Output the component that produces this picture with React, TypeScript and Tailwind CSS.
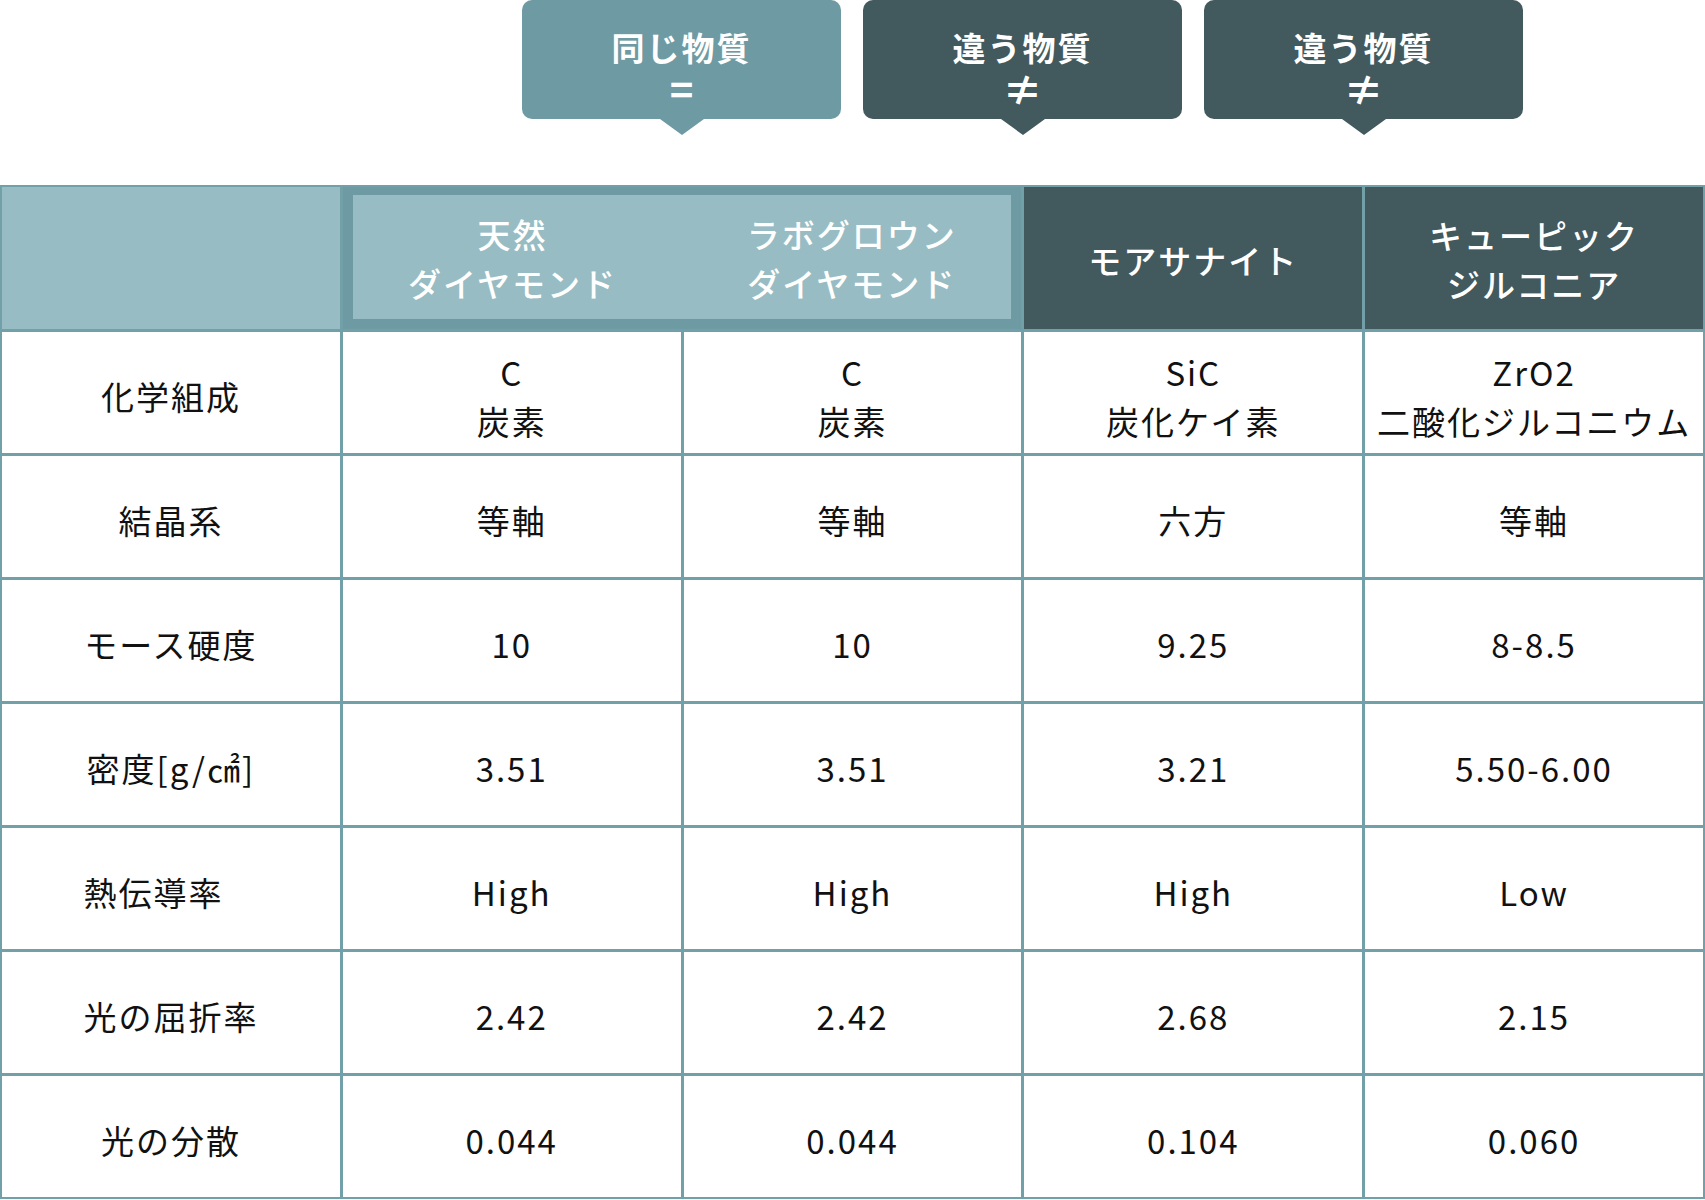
const font = {
  fontFamily: '"Noto Sans CJK JP", "Noto Sans", sans-serif',
};

const rows = [
  { label: "化学組成", values: [["C", "炭素"], ["C", "炭素"], ["SiC", "炭化ケイ素"], ["ZrO2", "二酸化ジルコニウム"]] },
  { label: "結晶系", values: [["等軸"], ["等軸"], ["六方"], ["等軸"]] },
  { label: "モース硬度", values: [["10"], ["10"], ["9.25"], ["8-8.5"]] },
  { label: "密度[g/㎠]", values: [["3.51"], ["3.51"], ["3.21"], ["5.50-6.00"]] },
  { label: "熱伝導率　", values: [["High"], ["High"], ["High"], ["Low"]] },
  { label: "光の屈折率", values: [["2.42"], ["2.42"], ["2.68"], ["2.15"]] },
  { label: "光の分散", values: [["0.044"], ["0.044"], ["0.104"], ["0.060"]] },
];

function Bubble({ title, sign, dark }: { title: string; sign: string; dark?: boolean }) {
  return (
    <div
      className={
        "relative flex h-[119px] w-[319px] flex-col items-center rounded-[10px] pt-[26px] text-white " +
        (dark ? "bg-[#42595e]" : "bg-[#6e9aa3]")
      }
    >
      <div className="text-[33px] font-bold leading-[42px] tracking-[2px]">{title}</div>
      <div className="text-[40px] font-semibold leading-[40px]">{sign}</div>
      <svg
        className="absolute left-1/2 top-full -translate-x-1/2"
        width="44"
        height="16"
        viewBox="0 0 44 16"
      >
        <polygon points="0,0 44,0 22,16" fill={dark ? "#42595e" : "#6e9aa3"} />
      </svg>
    </div>
  );
}

function Lines({ lines, white }: { lines: string[]; white?: boolean }) {
  return (
    <div
      className={
        "flex h-full flex-col items-center justify-center text-center text-[33px] leading-[49px] tracking-[2px] " +
        (white ? "pt-[4px] font-medium text-white" : "pt-[8px] text-[#111111]")
      }
    >
      {lines.map((l, i) => (
        <div key={i} className="whitespace-pre">
          {l}
        </div>
      ))}
    </div>
  );
}

export default function App() {
  return (
    <div className="w-[1705px] bg-white" style={font}>
      {/* bubbles */}
      <div className="flex h-[185px]">
        <div className="w-[340px]" />
        <div className="flex flex-1 justify-center gap-[22px]">
          <Bubble title="同じ物質" sign="=" />
          <Bubble title="違う物質" sign="≠" dark />
          <Bubble title="違う物質" sign="≠" dark />
        </div>
      </div>

      {/* table */}
      <div className="grid grid-cols-5 grid-rows-[142px_repeat(7,121px)] gap-[3px] bg-[#72a0a8] p-[2px]">
        <div className="bg-[#98bcc3]" />
        <div className="col-span-2 border-x-[10px] border-b-[10px] border-t-[8px] border-[#6e9aa3] bg-[#98bcc3]">
          <div className="-mx-[10px] grid h-full grid-cols-2">
            <Lines lines={["天然", "ダイヤモンド"]} white />
            <Lines lines={["ラボグロウン", "ダイヤモンド"]} white />
          </div>
        </div>
        <div className="bg-[#42595e]">
          <Lines lines={["モアサナイト"]} white />
        </div>
        <div className="bg-[#42595e]">
          <Lines lines={["キューピック", "ジルコニア"]} white />
        </div>

        {rows.map((r) => (
          <>
            <div key={r.label} className="bg-white">
              <Lines lines={[r.label]} />
            </div>
            {r.values.map((v, i) => (
              <div key={r.label + i} className="bg-white">
                <Lines lines={v} />
              </div>
            ))}
          </>
        ))}
      </div>
    </div>
  );
}
